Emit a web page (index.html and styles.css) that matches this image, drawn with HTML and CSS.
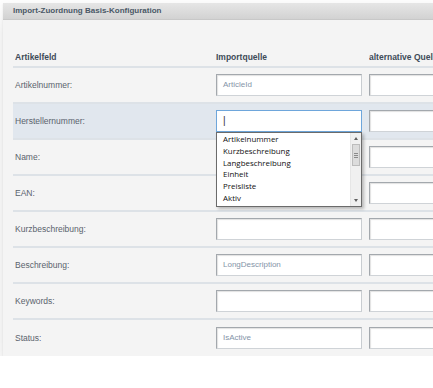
FILE: index.html
```html
<!DOCTYPE html>
<html lang="de">
<head>
  <meta charset="UTF-8">
  <title>Import-Zuordnung</title>
  <link rel="stylesheet" href="styles.css">
</head>
<body>

  <div class="panel">
    <div class="panel-head">Import-Zuordnung Basis-Konfiguration</div>

    <div class="panel-body">
      <!-- column headers -->
      <div class="row head">
        <span>Artikelfeld</span>
        <span>Importquelle</span>
        <span>alternative Quelle</span>
      </div>

      <div class="row">
        <label>Artikelnummer:</label>
        <div class="field">ArticleId</div>
        <div class="field"></div>
      </div>

      <div class="row active">
        <label>Herstellernummer:</label>
        <div class="field focus"><span class="caret">|</span>
          <!-- autocomplete list -->
          <div class="suggest">
            <ul>
              <li>Artikelnummer</li>
              <li>Kurzbeschreibung</li>
              <li>Langbeschreibung</li>
              <li>Einheit</li>
              <li>Preisliste</li>
              <li>Aktiv</li>
            </ul>
            <div class="scroll">
              <span class="arr up"></span>
              <span class="thumb"><i></i><i></i><i></i></span>
              <span class="arr down"></span>
            </div>
          </div>
        </div>
        <div class="field"></div>
      </div>

      <div class="row">
        <label>Name:</label>
        <div class="field"></div>
        <div class="field"></div>
      </div>

      <div class="row">
        <label>EAN:</label>
        <div class="field"></div>
        <div class="field"></div>
      </div>

      <div class="row">
        <label>Kurzbeschreibung:</label>
        <div class="field"></div>
        <div class="field"></div>
      </div>

      <div class="row">
        <label>Beschreibung:</label>
        <div class="field">LongDescription</div>
        <div class="field"></div>
      </div>

      <div class="row">
        <label>Keywords:</label>
        <div class="field"></div>
        <div class="field"></div>
      </div>

      <div class="row last">
        <label>Status:</label>
        <div class="field">IsActive</div>
        <div class="field"></div>
      </div>
    </div>
  </div>

</body>
</html>
```

FILE: styles.css
```css
body {
  margin: 0;
  background: #fff;
  font-family: "Liberation Sans", Arial, sans-serif;
  overflow: hidden;
}
.panel {
  margin: 3px 0 0 3px;
  width: 480px;
  background: #f4f4f4;
  box-shadow: 0 12px 24px rgba(0, 0, 0, 0.12), 0 1px 2px rgba(0, 0, 0, 0.08);
}
.panel-head {
  height: 16px;
  line-height: 16px;
  padding-left: 10px;
  font-size: 8px;
  font-weight: bold;
  color: #4a5866;
  background: linear-gradient(#e6e6e6, #d2d2d2);
  border-bottom: 1px solid #c8c8c8;
}
.panel-body {
  padding: 0 0 0 10px;
}
.row {
  display: grid;
  grid-template-columns: 203px 153px 1fr;
  align-items: center;
  height: 34px;
  border-bottom: 2px solid #dde2e7;
  font-size: 8.5px;
  color: #5a636d;
}
.row > label {
  padding-left: 2px;
}
.row.head {
  align-items: end;
  padding-bottom: 4px;
  box-sizing: border-box;
  height: 48px;
  font-weight: bold;
  color: #3e4b58;
}
.row.head span {
  white-space: nowrap;
  overflow: hidden;
}
.row.head span:first-child {
  padding-left: 2px;
}
.row.active {
  background: #e1e7ee;
}
.row.last {
  border-bottom: none;
  height: 36px;
}
.field {
  position: relative;
  height: 20px;
  line-height: 20px;
  background: #fff;
  border: 1px solid #a3a8ad;
  border-right-color: #c9cdd1;
  border-bottom-color: #cfd3d7;
  box-shadow: inset 1px 1px 1px rgba(0, 0, 0, 0.12);
  padding-left: 6px;
  font-size: 8px;
  color: #8494a8;
}
.row .field:nth-child(2) {
  width: 138px;
}
.field.focus {
  border-color: #6ea6db;
  box-shadow: none;
}
.caret {
  color: #333;
  font-size: 10px;
}
.suggest {
  position: absolute;
  left: -1px;
  top: 21px;
  width: 144px;
  height: 73px;
  display: flex;
  background: #fff;
  border: 1px solid #6b6b6b;
  box-shadow: 2px 2px 3px rgba(0, 0, 0, 0.25);
  z-index: 2;
}
.suggest ul {
  flex: 1;
  margin: 0;
  padding: 1px 0 0 6px;
  list-style: none;
  font-family: "Open Sans", "DejaVu Sans", sans-serif;
  font-size: 7.9px;
  line-height: 11.8px;
  color: #111;
}
.scroll {
  width: 10px;
  display: flex;
  flex-direction: column;
  align-items: center;
  background: #f0f0f0;
  border-left: 1px solid #e6e6e6;
}
.arr {
  width: 0;
  height: 0;
  margin: 4px 0;
  border-left: 2.5px solid transparent;
  border-right: 2.5px solid transparent;
}
.arr.up {
  border-bottom: 3px solid #606060;
}
.arr.down {
  margin-top: auto;
  border-top: 3px solid #606060;
}
.thumb {
  width: 8px;
  height: 22px;
  background: #dcdcdc;
  border: 1px solid #bcbcbc;
  box-sizing: border-box;
  display: flex;
  flex-direction: column;
  justify-content: center;
  align-items: center;
  gap: 1px;
}
.thumb i {
  display: block;
  width: 4px;
  height: 1px;
  background: #8a8a8a;
}
```
